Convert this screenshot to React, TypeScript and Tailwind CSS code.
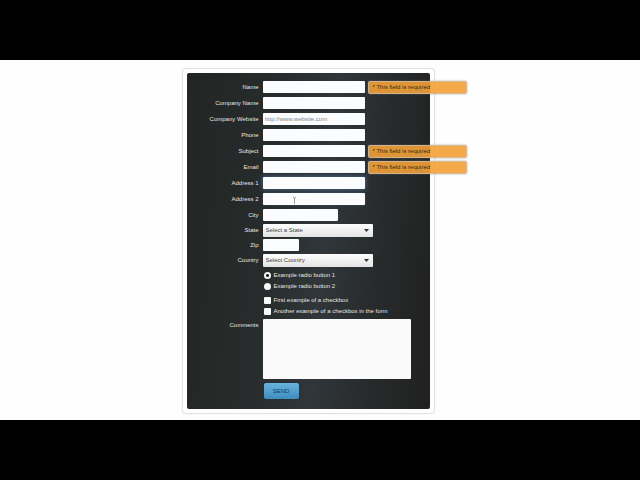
import React from "react";
import type { ReactNode } from "react";
import clsx from "clsx";

interface TextField {
  id: string;
  label: string;
  placeholder?: string;
  error?: string;
  narrow?: boolean;
  focused?: boolean;
  pointer?: boolean;
}

const REQUIRED = "* This field is required";

const fields: TextField[] = [
  { id: "name", label: "Name", error: REQUIRED },
  { id: "company", label: "Company Name" },
  {
    id: "website",
    label: "Company Website",
    placeholder: "http://www.website.com",
  },
  { id: "phone", label: "Phone" },
  { id: "subject", label: "Subject", error: REQUIRED },
  { id: "email", label: "Email", error: REQUIRED },
  { id: "address1", label: "Address 1", focused: true },
  { id: "address2", label: "Address 2", pointer: true },
  { id: "city", label: "City", narrow: true },
];

const inputStyles =
  "block h-3 rounded-[1px] bg-[#fbfcfd] px-[2px] leading-3 text-gray-700 outline-none placeholder:text-[#858585]";

const Row = ({
  id,
  label,
  children,
}: {
  id: string;
  label: string;
  children: ReactNode;
}) => (
  <div className="flex items-start gap-1">
    <label htmlFor={id} className="w-[72px] shrink-0 text-right leading-[13px]">
      {label}
    </label>
    {children}
  </div>
);

const ErrorTip = ({ children }: { children: ReactNode }) => (
  <span
    role="alert"
    className="absolute top-0 left-full ml-[3px] h-[13px] w-[99px] rounded-[2px] border border-[#c9c3b5]/70 bg-[#f3a136]/90 pl-1 leading-[11px] whitespace-nowrap text-[#3d2a0c] shadow-[0_0_2px_rgba(120,120,120,0.7)]"
  >
    {children}
  </span>
);

const TextPointer = () => (
  <svg
    className="pointer-events-none absolute top-1 left-[29px] h-2 w-[5px]"
    viewBox="0 0 5 8"
    fill="none"
    stroke="#888"
    strokeWidth="0.8"
  >
    <path d="M1 .5Q2.5.5 2.5 1.5Q2.5.5 4 .5M2.5 1.5V7" />
  </svg>
);

const Dropdown = ({ id, option }: { id: string; option: string }) => (
  <div className="relative">
    <select
      id={id}
      className="block h-[13px] w-[110px] appearance-none rounded-[1px] bg-linear-to-b from-[#fdfdfd] to-[#e4e4e4] px-[3px] leading-[13px] text-[#444]"
    >
      <option>{option}</option>
    </select>
    <svg
      className="pointer-events-none absolute top-[5px] right-1 h-[3px] w-[5px]"
      viewBox="0 0 5 3"
      fill="#333"
    >
      <path d="M0 0H5L2.5 3Z" />
    </svg>
  </div>
);

const Choice = ({
  type,
  id,
  name,
  label,
  checked,
}: {
  type: "radio" | "checkbox";
  id: string;
  name?: string;
  label: string;
  checked?: boolean;
}) => (
  <div className="flex h-[11px] items-center gap-[3px]">
    <input
      type={type}
      id={id}
      name={name}
      defaultChecked={checked}
      className={clsx(
        "size-[7px] shrink-0 appearance-none bg-[#fafafa]",
        type === "radio"
          ? "rounded-full checked:bg-[radial-gradient(circle,#222_0_1px,#fafafa_2px)]"
          : "rounded-[1px]"
      )}
    />
    <label htmlFor={id} className="leading-[11px] whitespace-nowrap">
      {label}
    </label>
  </div>
);

const ContactForm = () => (
  <form
    className="w-[243px] rounded-[2px] bg-linear-[95deg,#222524_0%,#282c2c_35%,#30363a_56%,#272a2b_78%,#202020_100%] pt-2 pb-[10px] text-[6px] text-[#e6e6e6]"
    onSubmit={(e) => e.preventDefault()}
  >
    <div className="flex flex-col gap-[3px]">
      {fields.map(
        ({ id, label, placeholder, error, narrow, focused, pointer }) => (
          <Row key={id} id={id} label={label}>
            <div className="relative">
              <input
                id={id}
                type="text"
                placeholder={placeholder}
                className={clsx(
                  inputStyles,
                  narrow ? "w-[75px]" : "w-[102px]",
                  focused && "shadow-[0_0_4px_1px_#44617c]",
                  pointer && "shadow-[0_0_2px_#44617c]"
                )}
              />
              {error && <ErrorTip>{error}</ErrorTip>}
              {pointer && <TextPointer />}
            </div>
          </Row>
        )
      )}
    </div>
    <div className="mt-[2px] flex flex-col gap-[2px]">
      <Row id="state" label="State">
        <Dropdown id="state" option="Select a State" />
      </Row>
      <Row id="zip" label="Zip">
        <input id="zip" type="text" className={clsx(inputStyles, "w-9")} />
      </Row>
      <Row id="country" label="Country">
        <Dropdown id="country" option="Select Country" />
      </Row>
    </div>
    <div className="mt-[3px] ml-[77px]">
      <Choice
        type="radio"
        id="radio1"
        name="example"
        label="Example radio button 1"
        checked
      />
      <Choice
        type="radio"
        id="radio2"
        name="example"
        label="Example radio button 2"
      />
    </div>
    <div className="mt-[3px] mb-[2px] ml-[77px]">
      <Choice type="checkbox" id="check1" label="First example of a checkbox" />
      <Choice
        type="checkbox"
        id="check2"
        label="Another example of a checkbox in the form"
      />
    </div>
    <Row id="comments" label="Comments">
      <textarea
        id="comments"
        className="block h-[60px] w-[148px] resize-none rounded-[1px] bg-[#fafafa] p-1 outline-none"
      />
    </Row>
    <button
      type="submit"
      className="mt-1 ml-[77px] block h-4 w-[35px] rounded-[2px] bg-linear-to-b from-[#68b3dd] to-[#3f8dbd] leading-4 text-[#173a52] shadow-[0_0_1px_#14384f]"
    >
      SEND
    </button>
  </form>
);

export default function App() {
  return (
    <div className="flex h-screen flex-col bg-black py-15 font-['Liberation_Sans',Arial,sans-serif]">
      <main className="flex flex-1 items-start justify-center bg-[#fefefe] pt-2">
        <div className="mr-6 rounded-[4px] border border-[#e2e2e2] bg-white p-1 shadow-[0_0_2px_#eee]">
          <ContactForm />
        </div>
      </main>
    </div>
  );
}
